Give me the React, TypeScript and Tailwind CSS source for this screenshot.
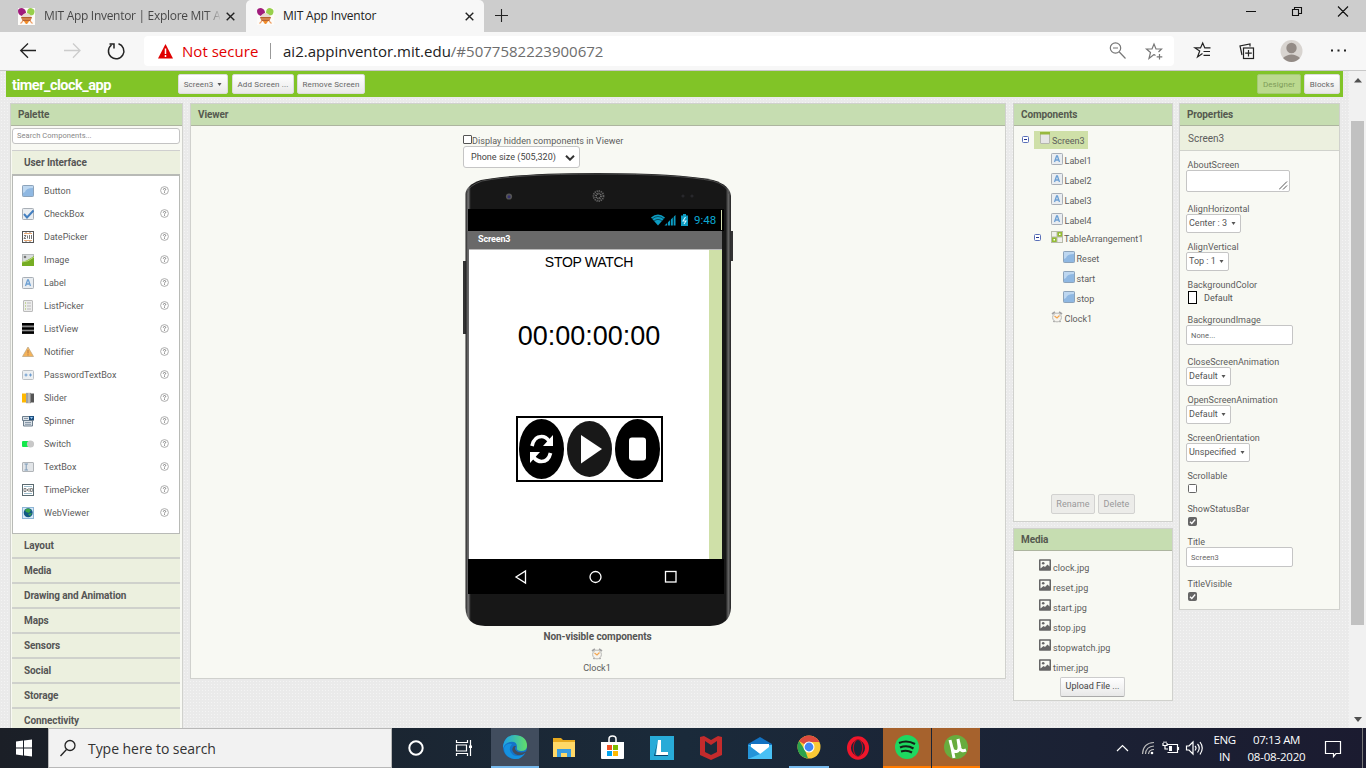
import React from 'react';

const SEGOE = "font-['Open_Sans','Noto_Sans',sans-serif]";

function Favicon() {
  return (
    <svg width="17" height="17" viewBox="0 0 17 17" className="shrink-0">
      <rect width="17" height="17" fill="#fdfbf8" />
      <path d="M0 3Q0 0 4 0Q8 1 8 5L4 8Q0 7 0 3Z" fill="#a01c7c" />
      <path d="M9 5Q9 0 13 0Q17 1 16.5 4Q16 8 12 7.5Z" fill="#97d04c" />
      <path d="M3.500 8.500Q5.500 5 8.500 5Q11.500 5 13.500 8.500L12.500 10H4.500Z" fill="#e9d9d0" />
      <path d="M3 9H14L12.500 13H4.500Z" fill="#b5622f" />
      <path d="M4 11H13M5 13L2.500 15.500M12 13L14.500 15.500" stroke="#efa168" strokeWidth="1.200" />
      <path d="M6.500 13.500L8.500 16L10.500 13.500Z" fill="#f28c28" stroke="#f28c28" />
    </svg>
  );
}

function Cross() {
  return (
    <svg width="9" height="9" viewBox="0 0 9 9" className="shrink-0">
      <path d="M.7 .7L8.300 8.300M8.300 .7L.7 8.300" stroke="#222" strokeWidth="1.400" />
    </svg>
  );
}

function Browser() {
  return (
    <div className={`shrink-0 ${SEGOE}`}>
      <div className="flex h-8 items-stretch bg-[#cdcdcd]">
        <div className="flex w-[246px] items-center pl-[18px] text-[#444]">
          <Favicon />
          <div className="ml-[9px] w-[176px] bg-gradient-to-r from-[#444] from-92% to-[#bdbdbd] bg-clip-text text-[12px] tracking-[-0.3px] whitespace-nowrap text-transparent">MIT App Inventor | Explore MIT A</div>
          <div className="ml-[6px]"><Cross /></div>
        </div>
        <div className="flex w-[238px] items-center rounded-t-[5px] bg-[#f7f7f7] pl-[11px]">
          <Favicon />
          <div className="ml-[9px] w-[182px] text-[12px] tracking-[-0.2px] text-[#222]">MIT App Inventor</div>
          <Cross />
        </div>
        <svg width="36" height="32" className="shrink-0"><path d="M11 15.500H24M17.500 9V22" stroke="#222" strokeWidth="1.100" /></svg>
        <div className="flex-1" />
        <svg width="130" height="32" className="shrink-0" fill="none" stroke="#111" strokeWidth="1.100">
          <path d="M10 11.500H20M56.500 9.500H62.500V15.500H56.500ZM58.500 9.500V7.500H65.500V13.500H63M102 6.500L112 16.500M112 6.500L102 16.500" />
        </svg>
      </div>
      <div className="flex h-[39px] items-start border-b border-[#c8c8c8] bg-[#f7f7f7]">
        <svg width="144" height="38" fill="none" strokeWidth="1.300" className="shrink-0">
          <path d="M20.500 18.500H36M28 11.500L20.700 18.500L28 25.800" stroke="#222" />
          <path d="M64 18.500H80M73 11.500L80 18.500L73 25.800" stroke="#ccc" />
          <path d="M118.500 11.800A7.700 7.700 0 1 1 111.500 13M109.500 12H114V16.500" stroke="#222" strokeWidth="1.500" />
        </svg>
        <div className="mt-1 flex h-[30px] w-[1030px] items-center rounded-[4px] bg-white pl-[13px] text-[15px]">
          <svg width="17" height="17" viewBox="0 0 17 17"><path d="M8.500 1L16 15.500H1Z" fill="#e00000" /><path d="M8.500 5.500V11M8.500 12V14" stroke="#fff" strokeWidth="1.500" /></svg>
          <span className="ml-[8px] w-[78px] tracking-[0.03px] whitespace-nowrap text-[#e20000]">Not secure</span>
          <span className="ml-[10px] h-4 w-px bg-[#999]" />
          <span className="ml-[12px] tracking-[0.01px] whitespace-nowrap text-[#222]">ai2.appinventor.mit.edu<span className="text-[#6d6d6d]">/#5077582223900672</span></span>
        </div>
        <svg width="192" height="38" className="shrink-0" fill="none" stroke="#222" strokeWidth="1.200">
          <path d="M28.500 21.500L23.500 25L25.700 19L21 15.900H26.500L28.700 11L30.800 15.900H36.500M29.500 19.500H36M29.500 23.300H36" />
          <rect x="69.500" y="16" width="10" height="10.500" />
          <path d="M74.500 18V24.500M71.200 21.200H77.800M68 23L66 14L76 12V14.500" />
          <circle cx="117.500" cy="19" r="11" fill="#d8d4d0" stroke="none" />
          <circle cx="117.500" cy="16" r="5.200" fill="#938b86" stroke="none" />
          <path d="M109 26Q113 22.500 117.500 22.500Q122 22.500 126 26Q122 30 117.500 30Q113 30 109 26Z" fill="#938b86" stroke="none" />
          <path d="M157 18.500H159M163.500 18.500H165.500M170 18.500H172" strokeWidth="1.800" />
        </svg>
      </div>
    </div>
  );
}

function AddressIcons() {
  return (
    <svg width="60" height="24" className="pointer-events-none absolute top-[40px] left-[1108px]" fill="none" stroke="#777" strokeWidth="1.200">
      <circle cx="7.500" cy="8" r="5.200" /><path d="M5 8H10M11.300 12L17.500 18.500" />
      <path d="M46 14.500L41 18.500L42.500 12.500L38.500 9H44L46 4L48 9H53.500L50.500 12M46 14.500L47.500 15.500M51.500 14V19.500M48.700 16.800H54.300" />
    </svg>
  );
}

function Caret() {
  return <svg width="5" height="3" viewBox="0 0 5 3" className="shrink-0"><path d="M.5 0H4.500L2.500 3Z" fill="#555" /></svg>;
}

const barBtn = 'flex h-[20px] items-center justify-center rounded-[2px] border border-[#dcdcdc] bg-gradient-to-b from-white to-[#e9e9e9] pt-px text-[8px] text-[#666] whitespace-nowrap';

function ProjectBar() {
  return (
    <div className="ml-[6px] flex h-[26px] w-[1337px] shrink-0 items-center bg-[#81c427]">
      <div className="w-[172px] pt-[3px] pl-[6px] text-[14.5px] font-bold tracking-[-0.5px] text-white">timer_clock_app</div>
      <div className={`${barBtn} w-[50px] gap-[4px] tracking-[0.1px]`}>Screen3 <Caret /></div>
      <div className={`${barBtn} ml-1 w-[62px] tracking-[0.15px]`}>Add Screen ...</div>
      <div className={`${barBtn} ml-[3px] w-[68px] tracking-[0.15px]`}>Remove Screen</div>
      <div className="flex-1" />
      <div className="flex h-[20px] w-[44px] items-center justify-center rounded-[2px] border border-[#a5ca76] bg-[#bbd98f] pt-px text-[8px] tracking-[0.1px] text-[#7e9c59]">Designer</div>
      <div className={`${barBtn} mr-[3px] ml-[3px] w-[36px] tracking-[0.1px]`}>Blocks</div>
    </div>
  );
}

function Head({ children }: { children: React.ReactNode }) {
  return <div className="flex h-[22px] shrink-0 items-center border-b border-[#adb59f] bg-[#c6ddb1] pl-[7px] text-[10px] font-bold tracking-[-0.1px] text-[#55594f]">{children}</div>;
}

function Icon({ kind }: { kind: string }) {
  const box = <rect x=".5" y=".5" width="11" height="11" rx=".8" fill="#e9edf1" stroke="#a9afb6" />;
  return (
    <svg width="12" height="12" viewBox="0 0 12 12" className="shrink-0">
      {kind === 'Button' && <><rect x=".5" y=".5" width="11" height="11" rx=".8" fill="#8fb8e2" stroke="#8ca3ba" /><path d="M1 1H11V3Q4 3 3 7L1 8Z" fill="#bdd7f0" /></>}
      {kind === 'CheckBox' && <>{box}<path d="M2 6L5 9.500L11.500 2.500" stroke="#437fc0" strokeWidth="2" fill="none" /></>}
      {kind === 'DatePicker' && <><rect x=".5" y=".5" width="11" height="11" fill="#fff" stroke="#555" /><path d="M2 2.500H10M2 9.500H10" stroke="#e8a977" /><path d="M2 4.500H4L2 7.500H4M5.500 4.500V7.500M7.500 4V8M9.500 4V8M4 1V2M8 1V2M4 10V11M8 10V11" stroke="#555" strokeWidth=".8" fill="none" /></>}
      {kind === 'Image' && <><rect x=".5" y=".5" width="11" height="11" fill="#d9dddd" stroke="#b8bcbc" /><path d="M0 8Q5 7 12 2V12H0Z" fill="#76ad23" /><path d="M0 8Q6 8 12 3" stroke="#bbd97c" fill="none" /><circle cx="3" cy="3" r="1.300" fill="#777" /></>}
      {kind === 'Label' && <>{box}<path d="M3.500 9L5.600 3H6.400L8.500 9M4.200 7H7.800" stroke="#6c9fd2" strokeWidth="1.300" fill="none" /></>}
      {kind === 'ListPicker' && <><rect x="1.500" y=".5" width="9" height="11" rx=".5" fill="#ececec" stroke="#bbb" /><path d="M3 3H4M3 6H4M3 9H4" stroke="#9fbf4a" /><path d="M5 3H9M5 6H9M5 9H9" stroke="#bbb" /></>}
      {kind === 'ListView' && <><path d="M0 0H12V11H0Z" fill="#555" /><path d="M0 1.200H12M0 5.500H12M0 9.700H12" stroke="#000" strokeWidth="2.200" /><path d="M0 3.400H12M0 7.500H12" stroke="#999" strokeWidth=".9" /></>}
      {kind === 'Notifier' && <><path d="M6 1L11.500 10.500H.5Z" fill="#f4b35a" stroke="#b7a384" strokeWidth=".7" /><path d="M6 4V7.500M6 8.300V9.500" stroke="#a76a40" strokeWidth=".8" /></>}
      {kind === 'PasswordTextBox' && <><rect x=".5" y="1.500" width="11" height="9" rx="1" fill="#eceff1" stroke="#bcc1c5" /><path d="M2.500 6H5.500M4 4.500V7.500M7 6H10M8.500 4.500V7.500" stroke="#6a9bd0" /></>}
      {kind === 'Slider' && <><path d="M0 1.500H4V10.500H0Z" fill="#ffb800" /><path d="M8 1.500H12V10.500H8Z" fill="#555" /><rect x="4" y=".8" width="5" height="10.500" fill="#bbb" /><path d="M5 1V11M8.500 1V11" stroke="#888" /></>}
      {kind === 'Spinner' && <><path d="M.5 1.500H11.500V5.500H.5ZM1.500 5.500H10.500V11H1.500Z" fill="#dbe2e8" stroke="#6d7e8d" /><path d="M2 3.500H6M3 7.500H9M3 9.300H9" stroke="#8898a8" /><path d="M7 1H12V5H7Z" fill="#1e4f7d" /><path d="M8 2L9.500 4L11 2Z" fill="#9cd0ff" /></>}
      {kind === 'Switch' && <><rect x="0" y="3" width="10" height="6" rx="1" fill="#13e84b" /><circle cx="8.500" cy="6" r="3.600" fill="#c8c8c8" /></>}
      {kind === 'TextBox' && <><rect x=".5" y="1.500" width="11" height="9" rx=".5" fill="#e2e5e8" stroke="#b0b4b8" /><path d="M2.500 3H6M4.200 3V9M2.500 9H6" stroke="#7d9bb8" fill="none" /></>}
      {kind === 'TimePicker' && <><rect x=".5" y=".5" width="11" height="11" fill="#fff" stroke="#5a6a70" /><path d="M2 2.500H10M2 9.500H10" stroke="#9dbccb" /><path d="M2 4.500H4V7.500H2ZM5.500 5V7M7 4V8M8.500 4.500H10.300V7.500H8.500Z" stroke="#666" strokeWidth=".8" fill="none" /></>}
      {kind === 'WebViewer' && <><rect x=".5" y=".5" width="11" height="11" fill="#d7e9f8" stroke="#8db5d6" /><circle cx="6.200" cy="5.800" r="4.500" fill="#125984" /><path d="M3 3Q6 0 9 3L7 6L4 5ZM6 7L10 6L8 9Z" fill="#39a646" /></>}
      {kind === 'Screen' && <><rect x="1.500" y=".5" width="9" height="11" rx=".5" fill="#e6e6e6" stroke="#b5b8ae" /><path d="M1 0H11V2.500H1Z" fill="#98b840" /></>}
      {kind === 'Table' && <><rect width="12" height="12" fill="#b7bba9" /><path d="M1 1H5.500V5.500H1ZM6.500 6.500H11V11H6.500Z" fill="#f0f0ec" /><path d="M6.500 1H11V5.500H6.500ZM1 6.500H5.500V11H1Z" fill="#94bd31" /><path d="M8 2.500H9.500V4H8ZM2.500 8H4V9.500H2.500Z" fill="#fff" /></>}
      {kind === 'Clock' && <><path d="M1 3L4 1M8 1L11 3M2.500 11L4 9.500M9.500 11L8 9.500" stroke="#a2a2a2" strokeWidth="1.700" /><circle cx="6" cy="6.500" r="4.400" fill="#f5f4ef" stroke="#b8b8b4" /><path d="M3.500 5L6 7L8.500 4.500" stroke="#f2a650" strokeWidth="1.200" fill="none" /></>}
      {kind === 'File' && <><rect width="12" height="11.500" y=".2" rx=".8" fill="#666" /><path d="M1.500 1.800H10.500V7.500L8.500 5.500L6 8L4.500 7L1.500 9.500Z" fill="#f8faf3" /><circle cx="4.200" cy="4.200" r="1.300" fill="#666" /></>}
    </svg>
  );
}

const palette = ['Button', 'CheckBox', 'DatePicker', 'Image', 'Label', 'ListPicker', 'ListView', 'Notifier', 'PasswordTextBox', 'Slider', 'Spinner', 'Switch', 'TextBox', 'TimePicker', 'WebViewer'];

function Palette() {
  return (
    <div className="m-px flex h-[640px] w-[173px] shrink-0 flex-col border border-[#d0d1cd] bg-[#f8f9f3]">
      <Head>Palette</Head>
      <div className="mt-[2px] ml-px flex h-[16px] w-[168px] shrink-0 items-center rounded-[3px] border border-[#c3c3c3] bg-white pl-[4px] text-[7.5px] tracking-[0.05px] text-[#888]">Search Components...</div>
      <div className="mt-[6px] ml-px flex h-[26px] w-[168px] shrink-0 items-center border-t border-b-2 border-t-[#cfcfcf] border-b-[#b8bab6] bg-[#ecf0df] pl-[12px] text-[10px] font-bold tracking-[-0.08px] text-[#555]">User Interface</div>
      <div className="ml-px h-[358px] w-[168px] shrink-0 border-x border-b border-[#b8bab6] bg-white pt-[3px]">
        {palette.map((n) => (
          <div key={n} className="flex h-[23px] items-center pr-[10px] pl-[9px] text-[9px] text-[#5c5c5c]">
            <Icon kind={n} />
            <span className="ml-[10px] flex-1 pt-[2px] tracking-[0.03px]">{n}</span>
            <svg width="9" height="9" viewBox="0 0 9 9"><circle cx="4.500" cy="4.500" r="3.900" fill="none" stroke="#999" strokeWidth=".8" /><path d="M3.300 3.700Q3.300 2.500 4.500 2.500Q5.700 2.500 5.700 3.600Q5.700 4.100 4.500 4.800V5.500M4.500 6.200V7" fill="none" stroke="#777" strokeWidth=".9" /></svg>
          </div>
        ))}
      </div>
      {['Layout', 'Media', 'Drawing and Animation', 'Maps', 'Sensors', 'Social', 'Storage', 'Connectivity'].map((n) => (
        <div key={n} className="ml-px flex h-[25px] w-[168px] shrink-0 items-center border-b-2 border-[#cfd1cc] bg-[#ecf0df] pl-[12px] text-[10px] font-bold tracking-[-0.1px] text-[#555]">{n}</div>
      ))}
    </div>
  );
}

function Phone() {
  return (
    <div className="relative ml-[272px] h-[453px] w-[270px] shrink-0">
      <svg width="270" height="453" viewBox="0 0 270 453" className="absolute inset-0 overflow-visible">
        <defs><linearGradient id="edge"><stop offset="0" stopColor="#202020" /><stop offset=".01" stopColor="#767676" /><stop offset=".02" stopColor="#171717" /><stop offset=".98" stopColor="#171717" /><stop offset=".99" stopColor="#666" /><stop offset="1" stopColor="#222" /></linearGradient></defs>
        <path d="M0 87H3V160H0ZM267 57H270V87H267Z" fill="#333" />
        <path d="M2.500 20Q3 11 18 6Q55 -1 135 -1Q215 -1 250 6Q267 11 268 22V434Q267 451.500 247 452H22Q3 451.500 2.500 434Z" fill="url(#edge)" />
        <path d="M4 19Q5 12 19 7Q55 0 135 0Q215 0 250 7Q264 11 266 20" fill="none" stroke="#505050" strokeWidth=".9" />
        <circle cx="46" cy="22.500" r="3.100" fill="#555" /><circle cx="46" cy="22.800" r="1.500" fill="#333070" />
        <circle cx="135.500" cy="22" r="5" fill="none" stroke="#606060" strokeWidth="1.800" strokeDasharray="1.300 .8" /><circle cx="135.500" cy="22" r="2.500" fill="none" stroke="#707070" strokeWidth="1.800" strokeDasharray="1.200 .7" />
        <circle cx="220" cy="22" r="1.600" fill="#28282c" /><circle cx="229" cy="22" r="1.600" fill="#28282c" />
      </svg>
      <div className="relative ml-[5px] w-[256px] pt-[35px]">
        <div className="flex h-[22px] items-center justify-end bg-black pr-[2px]">
          <svg width="41" height="12" viewBox="0 0 41 12" fill="#0c9cc2">
            <path d="M0 3.500Q7-2.500 14 3.500L7 11.500Z" /><path d="M1 5Q7 0 13 5M3 7Q7 3.800 11 7" stroke="#063c4a" fill="none" strokeWidth=".8" />
            <path d="M13.500 11.500L24.500 1V11.500Z" /><path d="M16.500 6V12M19.500 4V12M22.300 2V12" stroke="#000" strokeWidth=".8" />
            <path d="M30 1.500H32V0H35V1.500H37V12H30Z" /><path d="M34.500 3L32 7H35L33 10" stroke="#d7f4ff" fill="none" strokeWidth="1.100" />
          </svg>
          <span className="ml-[2px] w-[25px] pt-px text-[11.5px] text-[#0ca8d2]">9:48</span>
          <span className="ml-[2px] h-[20px] w-px bg-[#d5dfb0]" />
        </div>
        <div className="ml-px w-[253px]">
          <div className="flex h-[18px] items-center bg-[#696969] pb-px pl-[9px] text-[9px] font-bold tracking-[-0.15px] text-white">Screen3</div>
          <div className="flex h-[310px] border-t border-[#bbb] bg-white">
            <div className="flex w-[240px] flex-col items-center font-['Liberation_Sans',sans-serif] text-black">
              <div className="mt-[3px] h-[18px] text-[14px] leading-[18px] tracking-[-0.3px]">STOP WATCH</div>
              <div className="mt-[49px] h-[32px] text-[27px] leading-[32px]">00:00:00:00</div>
              <svg width="147" height="66" viewBox="0 0 147 66" className="mt-[64px] ml-px">
                <rect x="1" y="1" width="145" height="64" fill="#fff" stroke="#000" strokeWidth="2" />
                <ellipse cx="25.500" cy="33" rx="22.500" ry="30" /><ellipse cx="73.500" cy="33" rx="22.500" ry="28" fill="#181818" /><ellipse cx="121.500" cy="33" rx="22.500" ry="30" />
                <path d="M65 19L86 33L65 47.500Z" fill="#fff" /><rect x="113" y="21.500" width="17" height="23" rx="3" fill="#fff" />
                <path d="M16 30Q18 20.500 25.500 20.500Q30 20.500 33 25M34.500 37Q32.500 45.500 25.500 45.500Q21 45.500 17.500 41" stroke="#fff" strokeWidth="3.700" fill="none" />
                <path d="M37 19V30H27ZM14 47V36H24Z" fill="#fff" />
              </svg>
            </div>
            <div className="flex-1 bg-[#cfe0a8]" />
          </div>
        </div>
        <div className="h-[35px] bg-black"><svg width="256" height="35" fill="none" stroke="#fff" strokeWidth="1.300"><path d="M57.500 12V24L48 18Z" /><circle cx="127.500" cy="18" r="5.500" /><rect x="197.500" y="12.500" width="10.500" height="10.500" /></svg></div>
      </div>
    </div>
  );
}

function Viewer() {
  return (
    <div className="m-px ml-[6px] flex h-[576px] w-[816px] shrink-0 flex-col border border-[#d0d1cd] bg-[#f8f9f3]">
      <Head>Viewer</Head>
      <div className="mt-[9px] ml-[272px] flex h-[11px] shrink-0 items-center text-[9px] tracking-[0.05px] text-[#5c5c5c]"><span className="mb-[2px] h-[9px] w-[9px] rounded-[1px] border border-[#555] bg-white" /><span className="mt-[2px]">Display hidden components in Viewer</span></div>
      <div className="ml-[272px] flex h-[22px] w-[117px] shrink-0 items-center justify-between rounded-[3px] border border-[#c5c5c5] bg-white pt-px pr-[4px] pl-[7px] text-[9px] tracking-[0.03px] text-[#444]">Phone size (505,320)<svg width="10" height="6" viewBox="0 0 10 6"><path d="M1 .8L5 4.700L9 .8" stroke="#333" strokeWidth="2" fill="none" /></svg></div>
      <div className="h-[6px] shrink-0" />
      <Phone />
      <div className="mt-[4px] w-[813px] shrink-0 text-center text-[10px] leading-[12px] font-bold tracking-[-0.08px] text-[#555]">Non-visible components</div>
      <div className="mt-[5px] flex w-[812px] shrink-0 flex-col items-center text-[9px] leading-[16px] text-[#5c5c5c]"><Icon kind="Clock" />Clock1</div>
    </div>
  );
}

function Minus() {
  return <svg width="7" height="7" viewBox="0 0 7 7" className="shrink-0"><rect x=".5" y=".5" width="6" height="6" rx="1" fill="#fff" stroke="#5a70b8" /><path d="M2 3.500H5" stroke="#22348a" /></svg>;
}

function Row({ icon, label, child }: { icon: string; label: string; child?: boolean }) {
  return <div className={`flex h-5 shrink-0 items-center gap-[1.5px] text-[9px] tracking-[0.03px] text-[#5c5c5c] ${child ? 'pl-[49px]' : 'pl-[37px]'}`}><span className="mb-[4px]"><Icon kind={icon} /></span><span className="mt-[2px]">{label}</span></div>;
}

const grayBtn = 'flex h-5 items-center justify-center rounded-[2px] border border-[#d2d2d0] bg-[#ecece9] pt-px text-[9px] tracking-[0.1px] text-[#999]';

function Components() {
  return (
    <div className="m-px flex h-[419px] w-[160px] flex-col border border-[#d0d1cd] bg-[#f8f9f3]">
      <Head>Components</Head>
      <div className="mt-[4px] flex h-[19px] shrink-0 items-center pl-[8px] text-[9px] text-[#5c5c5c]">
        <Minus />
        <div className="mt-[1px] ml-[5px] flex h-[18px] w-[54px] items-center gap-[1px] bg-[#cfe0a8] pl-[5px]"><span className="mb-[5px]"><Icon kind="Screen" /></span><span className="mt-[3px]">Screen3</span></div>
      </div>
      <div className="h-[2px] shrink-0" />
      {['Label1', 'Label2', 'Label3', 'Label4'].map((l) => <Row key={l} icon="Label" label={l} />)}
      <div className="flex h-[18px] shrink-0 items-center pl-[20px] text-[9px] tracking-[0.03px] text-[#5c5c5c]"><span className="mb-[5px]"><Minus /></span><span className="mb-[6px] ml-[10px]"><Icon kind="Table" /></span><span className="mb-[1px] ml-[1px]">TableArrangement1</span></div>
      <Row child icon="Button" label="Reset" />
      <Row child icon="Button" label="start" />
      <Row child icon="Button" label="stop" />
      <Row icon="Clock" label="Clock1" />
      <div className="mt-auto mb-[7px] flex gap-[3px] pl-[37px]"><div className={`${grayBtn} w-[44px]`}>Rename</div><div className={`${grayBtn} w-[37px]`}>Delete</div></div>
    </div>
  );
}

function Media() {
  return (
    <div className="m-px mt-[6px] flex h-[173px] w-[160px] flex-col border border-[#d0d1cd] bg-[#f8f9f3]">
      <Head>Media</Head>
      <div className="h-[7px] shrink-0" />
      {['clock.jpg', 'reset.jpg', 'start.jpg', 'stop.jpg', 'stopwatch.jpg', 'timer.jpg'].map((f) => (
        <div key={f} className="flex h-5 shrink-0 items-center gap-[2px] pl-[25px] text-[9px] tracking-[0.06px] text-[#5c5c5c]"><span className="mb-[6px]"><Icon kind="File" /></span><span className="mt-[2px]">{f}</span></div>
      ))}
      <div className="-mt-px ml-[46px] flex h-5 w-[65px] shrink-0 items-center justify-center rounded-[2px] border border-[#ccc] border-b-[#aaa] bg-gradient-to-b from-white to-[#e8e8e8] text-[9px] text-[#444]">Upload File ...</div>
    </div>
  );
}

function PLabel({ children }: { children: React.ReactNode }) {
  return <div className="ml-[1.5px] h-[10px] text-[9px] leading-[10px] tracking-[0.03px] text-[#5c5c5c]">{children}</div>;
}
function Select({ w, children }: { w: string; children: React.ReactNode }) {
  return <div className={`mb-[9px] flex h-[19px] items-center justify-between rounded-[2px] border border-[#c5c5c5] bg-white pr-[4px] pl-[2px] text-[9px] text-[#555] ${w}`}>{children}<Caret /></div>;
}
function Check({ on }: { on?: boolean }) {
  return (
    <div className="h-[23px] pt-[3px] pl-[2px]"><svg width="9" height="9" viewBox="0 0 9 9"><rect x=".5" y=".5" width="8" height="8" rx="1" fill={on ? '#666' : '#fff'} stroke="#666" />{on && <path d="M2 4.700L3.800 6.500L7.200 2.500" stroke="#fff" strokeWidth="1.300" fill="none" />}</svg></div>
  );
}
function Input({ children }: { children: React.ReactNode }) {
  return <div className="mb-3 flex h-5 w-[107px] items-center rounded-[2px] border border-[#c5c5c5] bg-white pt-px pl-[4px] text-[7.5px] tracking-[0.1px] text-[#666]">{children}</div>;
}

function Properties() {
  return (
    <div className="m-px ml-[5px] flex h-[507px] w-[161px] shrink-0 flex-col border border-[#d0d1cd] bg-[#f8f9f3]">
      <Head>Properties</Head>
      <div className="flex h-[25px] shrink-0 items-center border-b border-[#d0d2cc] bg-[#ecf0df] pl-[8px] text-[10px] text-[#5c5c5c]">Screen3</div>
      <div className="pt-[9px] pl-[6px]">
        <PLabel>AboutScreen</PLabel>
        <div className="mb-3 flex h-[22px] w-[104px] items-end justify-end rounded-[2px] border border-[#c5c5c5] bg-white p-px"><svg width="9" height="9"><path d="M0 8.500L8 .5M4 8.500L8 4.500" stroke="#444" strokeWidth=".9" /></svg></div>
        <PLabel>AlignHorizontal</PLabel><Select w="w-[55px]">Center : 3</Select>
        <PLabel>AlignVertical</PLabel><Select w="w-[43px]">Top : 1</Select>
        <PLabel>BackgroundColor</PLabel>
        <div className="mb-[10px] flex h-[15px] items-center gap-[7px] pl-[2px] text-[9px] text-[#555]"><span className="h-[13px] w-[9px] border border-black bg-white" /><span className="pt-[2px]">Default</span></div>
        <PLabel>BackgroundImage</PLabel><Input>None...</Input>
        <PLabel>CloseScreenAnimation</PLabel><Select w="w-[45px]">Default</Select>
        <PLabel>OpenScreenAnimation</PLabel><Select w="w-[45px]">Default</Select>
        <PLabel>ScreenOrientation</PLabel><Select w="w-[64px]">Unspecified</Select>
        <PLabel>Scrollable</PLabel><Check />
        <PLabel>ShowStatusBar</PLabel><Check on />
        <PLabel>Title</PLabel><Input>Screen3</Input>
        <PLabel>TitleVisible</PLabel><Check on />
      </div>
    </div>
  );
}

function TaskIcon({ kind }: { kind: string }) {
  return (
    <svg width="26" height="26" viewBox="0 0 26 26">
      {kind === 'edge' && <><defs><linearGradient id="eg"><stop stopColor="#1ba0e8" /><stop offset="1" stopColor="#62df68" /></linearGradient></defs><circle cx="13" cy="13" r="12" fill="#1473c9" /><path d="M1 12Q3 1 13 1Q25 2 25 12Q25 17 19 17Q14 17 15 13Q15 7 8 8Q3 9 1 14Z" fill="url(#eg)" /><path d="M10 10Q5 16 11 21Q17 24 23 18Q20 26 12 25Q2 23 2 14Q4 9 10 10Z" fill="#1591df" /><path d="M14 12Q11 15 16 18Q20 19 24 17.500L26 17V20L23 19Q19 23 13 20Q8 16 12 12Z" fill="#414d5e" /></>}
      {kind === 'explorer' && <><path d="M2 3H10L12 5H24V22H2Z" fill="#e7a91f" /><path d="M2 7H24V22H2Z" fill="#ffd867" /><path d="M6 22V14H20V22H16V18H10V22Z" fill="#399ce0" /></>}
      {kind === 'store' && <><path d="M9 7V4Q9 1 12.500 1Q16 1 16 4V7" stroke="#fff" strokeWidth="1.500" fill="none" /><path d="M1 7H24V23Q24 24 23 24H2Q1 24 1 23Z" fill="#fff" /><path d="M7 10H12V15H7Z" fill="#f05022" /><path d="M13 10H18V15H13Z" fill="#7fba00" /><path d="M7 16H12V21H7Z" fill="#00a4ef" /><path d="M13 16H18V21H13Z" fill="#ffb900" /></>}
      {kind === 'l' && <><rect x="1" y="1" width="24" height="24" fill="#28abd8" /><path d="M9 5L6 20H19V21H5Z" fill="#0b446c" /><path d="M9 5H12V17H19V20H7Z" fill="#fff" /></>}
      {kind === 'mcafee' && <><path d="M2 2L6 1L13 5L20 1L24 2V20L13 25L2 20Z" fill="#c42b2c" /><path d="M7 6L13 10L19 6V17L13 20L7 17Z" fill="#1c2b3a" /></>}
      {kind === 'mail' && <><path d="M1 9L13 2L25 9V11H1Z" fill="#1272c2" /><path d="M1 10H25V24H1Z" fill="#49c1f5" /><path d="M4 9H22V12L13 19L4 12Z" fill="#fff" /><path d="M1 10L13 19L1 24Z" fill="#2494d8" /></>}
      {kind === 'chrome' && <><circle cx="13" cy="13" r="11.500" fill="#fac935" /><path d="M13 13L3 7Q7 1.500 13 1.500Q20 1.500 23.500 8H13Z" fill="#dd4b3e" /><path d="M3 7L9 16L12 24.500Q1.500 23 1.500 13Q1.500 9 3 7Z" fill="#2ba24c" /><circle cx="13" cy="13" r="5.500" fill="#fff" /><circle cx="13" cy="13" r="4.400" fill="#4285f4" /></>}
      {kind === 'opera' && <><ellipse cx="13" cy="13" rx="9" ry="9.700" fill="none" stroke="#f0162b" strokeWidth="4" /><ellipse cx="13" cy="13" rx="4.700" ry="8.500" fill="#19283a" stroke="#b50d20" strokeWidth="1.200" /></>}
      {kind === 'spotify' && <><circle cx="13" cy="13" r="12" fill="#1ed760" /><path d="M5 9Q13 5.500 21 10M6 13.500Q13 10.500 19.500 14.500M7 17.500Q13 15.500 18 18.500" stroke="#142018" strokeWidth="2.100" fill="none" /></>}
      {kind === 'utorrent' && <><circle cx="13" cy="13" r="12" fill="#68ac3e" /><path d="M7 6L9 14Q10 18 13.500 17.500Q16.500 17 16 12L15 5L17 14Q18 18 23 16M9 14L11 24" stroke="#fff" strokeWidth="3" fill="none" /></>}
    </svg>
  );
}

const apps: [string, string][] = [
  ['edge', 'bg-[#414d5e] border-b-[2px] border-[#76b9ed]'], ['explorer', ''], ['store', ''], ['l', ''], ['mcafee', ''], ['mail', ''],
  ['chrome', ''], ['opera', ''], ['spotify', 'bg-[#a6622d] border-b-2 border-[#ff7b00]'], ['utorrent', 'bg-[#a6622d] border-b-2 border-[#ff7b00]'],
];

function Taskbar() {
  return (
    <div className={`flex h-10 shrink-0 bg-gradient-to-r from-[#1b1f27] via-[#1a2a3a] to-[#1b1b30] text-white ${SEGOE}`}>
      <svg width="48" height="40" className="shrink-0"><path d="M16 13.500L23 12.500V19.500H16ZM24 12.400L32 11.500V19.500H24ZM16 20.500H23V27.500L16 26.500ZM24 20.500H32V28.500L24 27.500Z" fill="#fff" /></svg>
      <div className="flex w-[344px] shrink-0 items-center border border-[#b8b8b8] bg-[#f2f2f2] pl-[10px] text-[14px] tracking-[-0.05px] text-[#333]">
        <svg width="18" height="18" viewBox="0 0 18 18" fill="none" stroke="#222" strokeWidth="1.300"><circle cx="11" cy="6.500" r="5" /><path d="M7.500 10.500L1.500 17" /></svg><span className="ml-[11px]">Type here to search</span>
      </div>
      <svg width="99" height="40" className="shrink-0" fill="none" stroke="#fff"><circle cx="24" cy="20" r="6.700" strokeWidth="2" /><path d="M64.500 12V14.500H75.500V12M64.500 28V25.500H75.500V28M64.500 17H74.500V23H64.500ZM78.500 12V28" strokeWidth="1.200" /><path d="M77 17.500H80V20H77Z" fill="#fff" stroke="none" /></svg>
      <div className="flex gap-px">
        {apps.map(([k, c]) => (
          <div key={k} className={`flex w-12 items-center justify-center ${c}`}>
            {k === 'chrome' ? <div className="flex h-10 w-10 items-center justify-center border-b-2 border-[#76b9ed]"><TaskIcon kind={k} /></div> : <TaskIcon kind={k} />}
          </div>
        ))}
      </div>
      <div className="flex-1" />
      <svg width="92" height="40" className="shrink-0" fill="none" stroke="#fff" strokeWidth="1.200">
        <path d="M5 23L10.500 17.500L16 23" />
        <path d="M30.500 26Q31 15 42 14.500M33.500 26Q34 18.500 42 18M36.500 26Q37 21.500 42 21.500" stroke="#bbb" /><circle cx="40" cy="25" r="1.300" fill="#fff" stroke="none" />
        <path d="M55.500 16.500H65.500V24.500H55.500M66.500 19V22M51 15V17.500H55V15M52 13.500V15M54 13.500V15M53 18V21H56" /><path d="M57 18H60V23H57Z" fill="#fff" stroke="none" />
        <path d="M74.500 18H77L81 14V26L77 22H74.500ZM83 18Q85 20 83 22.500M85.500 16Q89 20 85.500 24.500M88 14Q92.500 20 88 26.500" />
      </svg>
      <div className="flex w-[41px] flex-col items-center justify-center pb-px text-[11.5px] leading-[17px] tracking-[-0.4px]"><span>ENG</span><span>IN</span></div>
      <div className="flex w-[63px] flex-col items-center justify-center pb-px text-[11.5px] leading-[17px] tracking-[-0.35px] whitespace-nowrap"><span>07:13 AM</span><span className="tracking-[-0.2px]">08-08-2020</span></div>
      <svg width="58" height="40" className="shrink-0" fill="none" stroke="#fff"><path d="M17.500 13.500H32.500V25.500H28L25.500 28.500V25.500H17.500Z" strokeWidth="1.200" /><path d="M54.500 0V40" stroke="#777" /></svg>
    </div>
  );
}

export default function App() {
  return (
    <div className="relative flex h-[768px] w-[1366px] flex-col overflow-hidden font-['Roboto',sans-serif]">
      <Browser />
      <AddressIcons />
      <div className="flex h-[657px] overflow-hidden">
        <div className="flex w-[1349px] flex-col overflow-hidden bg-[#eaeaea] bg-[radial-gradient(#dedede_0.6px,transparent_0.7px),radial-gradient(#f4f4f4_0.6px,transparent_0.7px)] bg-[length:4px_4px,3px_3px]">
          <ProjectBar />
          <div className="mt-[5px] flex h-[620px] items-start pl-[9px]">
            <Palette />
            <Viewer />
            <div className="ml-[5px] shrink-0"><Components /><Media /></div>
            <Properties />
          </div>
        </div>
        <div className="flex w-[17px] flex-col items-center bg-[#f1f1f1]">
          <svg width="17" height="50"><path d="M5 11.500H13L9 7Z" fill="#505050" /></svg>
          <div className="h-[504px] w-[13px] bg-[#c1c1c1]" />
          <div className="flex-1" />
          <svg width="17" height="17"><path d="M5 6H13L9 11Z" fill="#505050" /></svg>
        </div>
      </div>
      <Taskbar />
    </div>
  );
}
